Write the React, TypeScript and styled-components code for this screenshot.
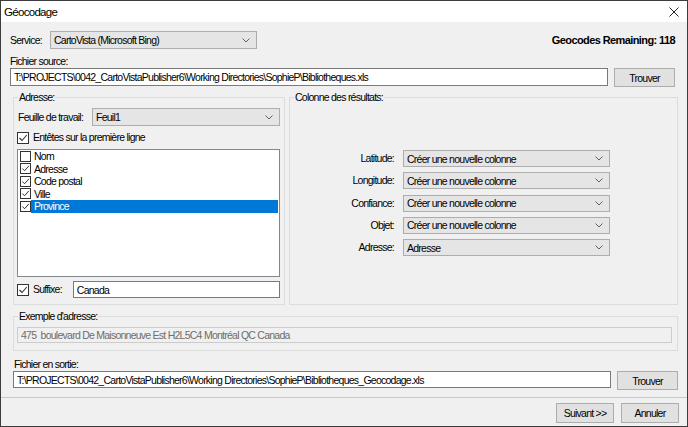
import React from "react";
import styled, { createGlobalStyle } from "styled-components";

const GlobalStyle = createGlobalStyle`
  html, body {
    margin: 0;
    padding: 0;
    background: #f0f0f0;
  }
  body {
    font-family: "Liberation Sans", Arial, sans-serif;
    font-size: 10.5px;
    letter-spacing: -0.75px;
    color: #000;
  }
  * {
    box-sizing: border-box;
  }
`;

const Window = styled.div`
  width: 688px;
  height: 427px;
  border: 1px solid #3c3c3c;
  background: #f0f0f0;
  display: flex;
  flex-direction: column;
  overflow: hidden;
`;

const TitleBar = styled.div`
  height: 21px;
  flex: none;
  background: #fff;
  display: flex;
  align-items: center;
  justify-content: space-between;
  padding: 0 8px 0 3px;
  font-size: 11.5px;
  letter-spacing: -0.7px;
`;

const Body = styled.div`
  display: flex;
  flex-direction: column;
  padding: 9px 9px 7px 9px;
`;

const TopRow = styled.div`
  display: flex;
  align-items: center;
  height: 18px;
  padding-right: 3px;
`;

const Label = styled.span<{ $w?: number; $right?: boolean }>`
  flex: none;
  line-height: 13px;
  white-space: nowrap;
  width: ${(p) => (p.$w ? `${p.$w}px` : "auto")};
  text-align: ${(p) => (p.$right ? "right" : "left")};
`;

const Remaining = styled.span`
  margin-left: auto;
  font-weight: bold;
  font-size: 11px;
  letter-spacing: -0.6px;
`;

const Caption = styled.div<{ $top: number; $left?: number }>`
  line-height: 13px;
  margin-top: ${(p) => p.$top}px;
  margin-left: ${(p) => p.$left ?? 0}px;
`;

const FileRow = styled.div<{ $left?: number; $right?: number }>`
  display: flex;
  align-items: flex-start;
  gap: 6px;
  margin-left: ${(p) => p.$left ?? 0}px;
  padding-right: ${(p) => p.$right ?? 0}px;
`;

const TextBox = styled.div<{ $h?: number; $disabled?: boolean }>`
  flex: 1;
  min-width: 0;
  height: ${(p) => p.$h ?? 18}px;
  display: flex;
  align-items: center;
  padding-left: 3px;
  background: ${(p) => (p.$disabled ? "#f0f0f0" : "#fff")};
  border: 1px solid ${(p) => (p.$disabled ? "#cccccc" : "#7a7a7a")};
  color: ${(p) => (p.$disabled ? "#6d6d6d" : "#000")};
  white-space: pre;
  overflow: hidden;
`;

const Button = styled.button<{ $w?: number; $h?: number }>`
  flex: none;
  width: ${(p) => p.$w ?? 61}px;
  height: ${(p) => p.$h ?? 19}px;
  padding: 0;
  background: #e1e1e1;
  border: 1px solid #adadad;
  font: inherit;
  letter-spacing: inherit;
  color: #000;
`;

const ComboBox = styled.div<{ $w?: number; $h?: number }>`
  flex: ${(p) => (p.$w ? "none" : "1")};
  width: ${(p) => (p.$w ? `${p.$w}px` : "auto")};
  height: ${(p) => p.$h ?? 18}px;
  display: flex;
  align-items: center;
  padding-left: 3px;
  background: #e5e5e5;
  border: 1px solid #adadad;
  white-space: nowrap;
`;

const Arrow = styled.svg`
  margin-left: auto;
  margin-right: 6px;
`;

const GroupRow = styled.div<{ $top: number }>`
  display: flex;
  gap: 4px;
  margin: ${(p) => p.$top}px 0 0 3px;
`;

const Group = styled.fieldset<{ $w?: number; $padRight?: number; $padBottom?: number }>`
  margin: 0;
  min-width: 0;
  flex: ${(p) => (p.$w ? "none" : "1")};
  width: ${(p) => (p.$w ? `${p.$w}px` : "auto")};
  border: 1px solid #dcdcdc;
  padding: 0 ${(p) => p.$padRight ?? 4}px ${(p) => p.$padBottom ?? 6}px 3px;
  display: flex;
  flex-direction: column;
`;

const Legend = styled.legend`
  padding: 0 1px;
  margin-left: 1px;
  line-height: 13px;
`;

const FieldRow = styled.div<{ $top: number }>`
  display: flex;
  align-items: center;
  margin-top: ${(p) => p.$top}px;
`;

const SheetLabel = styled(Label)`
  padding-left: 1px;
`;

const CheckLabel = styled.span`
  margin-left: 4px;
  line-height: 13px;
`;

const SuffixBox = styled.div`
  display: flex;
  flex: 1;
  margin-left: 11px;
`;

const Box = styled.span<{ $size: number }>`
  flex: none;
  width: ${(p) => p.$size}px;
  height: ${(p) => p.$size}px;
  border: 1px solid #333;
  background: #fff;
  display: flex;
  align-items: center;
  justify-content: center;
`;

const ListBox = styled.div`
  margin-top: 5px;
  height: 128px;
  border: 1px solid #828790;
  background: #fff;
  padding: 0 0 0 2px;
`;

const ListItem = styled.div`
  display: flex;
  align-items: center;
  height: 12.5px;
`;

const ItemText = styled.span<{ $selected?: boolean }>`
  flex: 1;
  height: 12.5px;
  line-height: 12.5px;
  margin-right: 1px;
  padding-left: 3px;
  background: ${(p) => (p.$selected ? "#0078d7" : "transparent")};
  color: ${(p) => (p.$selected ? "#fff" : "#000")};
`;

const ResultGrid = styled.div`
  display: grid;
  grid-template-columns: 101px 207px;
  column-gap: 9px;
  row-gap: 5.25px;
  align-items: center;
  margin-top: 46px;
`;

const Footer = styled.div`
  flex: 1;
  border-top: 1px solid #c9c9c9;
  display: flex;
  justify-content: flex-end;
  align-items: flex-start;
  gap: 7px;
  padding: 5px 8px 0 0;
`;

const Check = ({ on, size = 12 }: { on: boolean; size?: number }) => (
  <Box $size={size}>
    {on && (
      <svg width={size - 2} height={size - 2} viewBox="0 0 10 10">
        <polyline points="1.5,5 4,7.5 8.8,2" fill="none" stroke="#333" strokeWidth="1.1" />
      </svg>
    )}
  </Box>
);

const Combo = ({ value, w, h }: { value: string; w?: number; h?: number }) => (
  <ComboBox $w={w} $h={h}>
    {value}
    <Arrow width="8" height="5" viewBox="0 0 8 5">
      <polyline points="0.5,0.5 4,4 7.5,0.5" fill="none" stroke="#606060" strokeWidth="1" />
    </Arrow>
  </ComboBox>
);

const fields = [
  { name: "Nom", on: false },
  { name: "Adresse", on: true },
  { name: "Code postal", on: true },
  { name: "Ville", on: true },
  { name: "Province", on: true, selected: true },
];

const results = [
  { label: "Latitude:", value: "Créer une nouvelle colonne" },
  { label: "Longitude:", value: "Créer une nouvelle colonne" },
  { label: "Confiance:", value: "Créer une nouvelle colonne" },
  { label: "Objet:", value: "Créer une nouvelle colonne" },
  { label: "Adresse:", value: "Adresse" },
];

export default function App() {
  return (
    <>
      <GlobalStyle />
      <Window>
        <TitleBar>
          <span>Géocodage</span>
          <svg width="10" height="10" viewBox="0 0 10 10">
            <path d="M0.5 0.5 L9.5 9.5 M9.5 0.5 L0.5 9.5" stroke="#222" strokeWidth="1" />
          </svg>
        </TitleBar>
        <Body>
          <TopRow>
            <Label $w={40}>Service:</Label>
            <Combo value="CartoVista (Microsoft Bing)" w={207} />
            <Remaining>Geocodes Remaining: 118</Remaining>
          </TopRow>
          <Caption $top={6}>Fichier source:</Caption>
          <FileRow $right={3}>
            <TextBox>T:\PROJECTS\0042_CartoVistaPublisher6\Working Directories\SophieP\Bibliotheques.xls</TextBox>
            <Button>Trouver</Button>
          </FileRow>

          <GroupRow $top={4}>
            <Group $w={272}>
              <Legend>Adresse:</Legend>
              <FieldRow $top={4}>
                <SheetLabel $w={75}>Feuille de travail:</SheetLabel>
                <Combo value="Feuil1" />
              </FieldRow>
              <FieldRow $top={5}>
                <Check on />
                <CheckLabel>Entêtes sur la première ligne</CheckLabel>
              </FieldRow>
              <ListBox>
                {fields.map((f) => (
                  <ListItem key={f.name}>
                    <Check on={f.on} size={11} />
                    <ItemText $selected={f.selected}>{f.name}</ItemText>
                  </ListItem>
                ))}
              </ListBox>
              <FieldRow $top={4}>
                <Check on />
                <CheckLabel>Suffixe:</CheckLabel>
                <SuffixBox>
                  <TextBox $h={17}>Canada</TextBox>
                </SuffixBox>
              </FieldRow>
            </Group>

            <Group>
              <Legend>Colonne des résultats:</Legend>
              <ResultGrid>
                {results.map((r) => (
                  <React.Fragment key={r.label}>
                    <Label $right>{r.label}</Label>
                    <Combo value={r.value} h={17} />
                  </React.Fragment>
                ))}
              </ResultGrid>
            </Group>
          </GroupRow>

          <GroupRow $top={5}>
            <Group $padRight={5} $padBottom={7}>
              <Legend>Exemple d'adresse:</Legend>
              <FieldRow $top={4}>
                <TextBox $h={16} $disabled>
                  475  boulevard De Maisonneuve Est H2L5C4 Montréal QC Canada
                </TextBox>
              </FieldRow>
            </Group>
          </GroupRow>

          <Caption $top={7} $left={4}>Fichier en sortie:</Caption>
          <FileRow $left={3}>
            <TextBox $h={17}>T:\PROJECTS\0042_CartoVistaPublisher6\Working Directories\SophieP\Bibliotheques_Geocodage.xls</TextBox>
            <Button>Trouver</Button>
          </FileRow>
        </Body>
        <Footer>
          <Button $w={58} $h={20}>Suivant &gt;&gt;</Button>
          <Button $w={58} $h={20}>Annuler</Button>
        </Footer>
      </Window>
    </>
  );
}
